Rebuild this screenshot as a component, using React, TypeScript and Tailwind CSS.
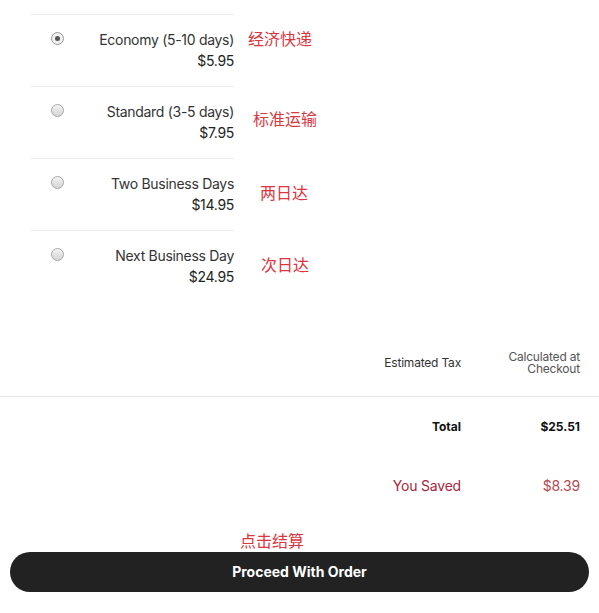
import React from 'react';

const options = [
  { label: 'Economy (5-10 days)', price: '$5.95', note: '经济快递', checked: true, noteCls: 'ml-[14px] mt-[15px]' },
  { label: 'Standard (3-5 days)', price: '$7.95', note: '标准运输', checked: false, noteCls: 'ml-[19px] mt-[23px]' },
  { label: 'Two Business Days', price: '$14.95', note: '两日达', checked: false, noteCls: 'ml-[26px] mt-[25px]' },
  { label: 'Next Business Day', price: '$24.95', note: '次日达', checked: false, noteCls: 'ml-[27px] mt-[25px]' },
];

function Radio({ checked }: { checked: boolean }) {
  if (checked) {
    return (
      <div className="w-[13px] h-[13px] rounded-full border border-[#9a9a9a] bg-[#f0f0f0] flex items-center justify-center">
        <div className="w-[5px] h-[5px] rounded-full bg-[#555]" />
      </div>
    );
  }
  return (
    <div className="w-[13px] h-[13px] rounded-full border border-[#a8a8a8] bg-gradient-to-b from-[#f4f4f4] to-[#d4d4d4]" />
  );
}

export default function App() {
  return (
    <div
      className="w-[599px] h-[613px] bg-white text-[#333] overflow-hidden"
      style={{ fontFamily: 'Inter, "Noto Sans CJK SC", sans-serif' }}
    >
      {/* Shipping options */}
      <div className="pt-[14px] pl-[31px]">
        {options.map((o) => (
          <div key={o.label} className="flex">
            <div className="w-[203px] h-[72px] border-t border-[#ebebeb] flex">
              <div className="ml-[20px] mt-[17px]">
                <Radio checked={o.checked} />
              </div>
              <div className="flex-1 text-right pt-[15px] text-[14px] tracking-[-0.3px]">
                <div className="leading-[20px] text-[#333]">{o.label}</div>
                <div className="leading-[21px] text-[#222]">{o.price}</div>
              </div>
            </div>
            <div className={`text-[16px] leading-[20px] text-[#d9363e] ${o.noteCls}`}>{o.note}</div>
          </div>
        ))}
      </div>

      {/* Summary */}
      <div className="mt-[49px] pb-[21px] border-b border-[#e6e6e6] flex justify-end items-center pr-[19px] tracking-[-0.2px]">
        <div className="text-[12px] text-[#333] mr-[19px]">Estimated Tax</div>
        <div className="w-[100px] text-right text-[12px] leading-[12px] text-[#555]">
          Calculated at
          <br />
          Checkout
        </div>
      </div>

      <div className="mt-[22px] flex justify-end items-center pr-[19px] text-[12px] leading-[16px] font-bold text-[#111]">
        <div className="mr-[19px]">Total</div>
        <div className="w-[100px] text-right">$25.51</div>
      </div>

      <div className="mt-[41px] flex justify-end items-center pr-[19px] text-[14px] leading-[20px] text-[#a8263b] tracking-[-0.2px]">
        <div className="mr-[19px]">You Saved</div>
        <div className="w-[100px] text-right text-[#b34a4f]">$8.39</div>
      </div>

      <div className="mt-[35px] pl-[240px] text-[16px] leading-[20px] text-[#d9363e]">点击结算</div>

      <div className="mt-[1px] mx-[10px]">
        <button className="w-full h-[40px] rounded-full bg-[#222] text-white text-[14px] font-bold pb-[1px]">
          Proceed With Order
        </button>
      </div>
    </div>
  );
}
